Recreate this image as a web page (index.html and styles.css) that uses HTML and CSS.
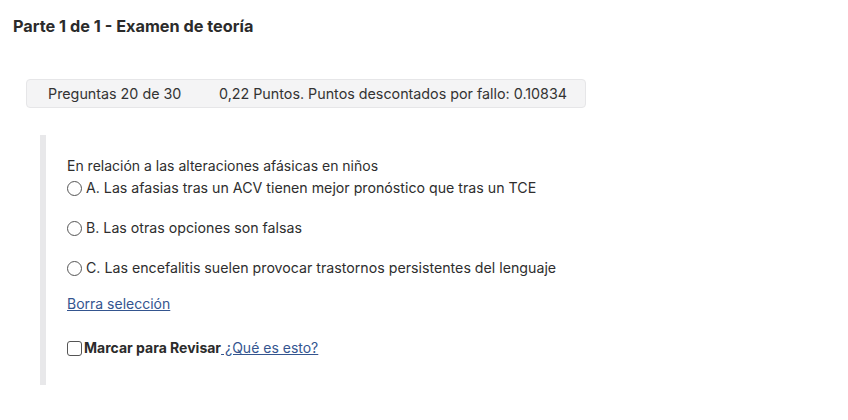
FILE: index.html
```html
<!DOCTYPE html>
<html lang="es">
<head>
<meta charset="utf-8">
<link rel="stylesheet" href="styles.css">
</head>
<body>
<h1 class="title">Parte 1 de 1 - Examen de teoría</h1>
<div class="infobar">
  <span class="count">Preguntas 20 de 30</span>
  <span class="points">0,22 Puntos. Puntos descontados por fallo: 0.10834</span>
</div>
<div class="question">
  <p class="stem">En relación a las alteraciones afásicas en niños</p>
  <div class="option first"><span class="radio"></span><span>A. Las afasias tras un ACV tienen mejor pronóstico que tras un TCE</span></div>
  <div class="option"><span class="radio"></span><span>B. Las otras opciones son falsas</span></div>
  <div class="option"><span class="radio"></span><span>C. Las encefalitis suelen provocar trastornos persistentes del lenguaje</span></div>
  <a class="clear" href="#">Borra selección</a>
  <div class="review"><span class="checkbox"></span><strong>Marcar para Revisar</strong><a class="what" href="#">&nbsp;¿Qué es esto?</a></div>
</div>
</body>
</html>
```
FILE: styles.css
```css
html, body {
  margin: 0;
  padding: 0;
  background: #ffffff;
}
body {
  font-family: Inter, "Noto Sans", sans-serif;
  color: #2e2e2e;
  font-size: 14px;
}
.title {
  margin: 16px 0 0 13px;
  font-size: 16.3px;
  font-weight: 700;
  line-height: 20px;
  color: #2b2b2b;
}
.infobar {
  margin: 43px 0 0 26px;
  width: 558px;
  height: 27px;
  box-sizing: content-box;
  display: flex;
  align-items: center;
  background: #f4f4f5;
  border: 1px solid #e6e6e8;
  border-radius: 4px;
  font-size: 14.3px;
  color: #333;
}
.count {
  margin-left: 21px;
  width: 171px;
}
.question {
  margin: 27px 0 0 40px;
  border-left: 6px solid #e8e8ea;
  padding: 20px 0 26px 21px;
}
.stem {
  margin: 0;
  line-height: 22px;
}
.option {
  display: flex;
  align-items: center;
  gap: 4px;
  line-height: 22px;
  margin-top: 18px;
  font-size: 14.2px;
}
.option.first {
  margin-top: 0;
}
.radio {
  width: 13px;
  height: 13px;
  border: 1.5px solid #555;
  border-radius: 50%;
  flex: none;
}
.clear {
  display: inline-block;
  margin-top: 14px;
  line-height: 22px;
  color: #34558f;
  text-decoration: underline;
}
.review {
  display: flex;
  align-items: center;
  margin-top: 22px;
  line-height: 22px;
}
.checkbox {
  width: 13px;
  height: 13px;
  border: 1.5px solid #555;
  border-radius: 3px;
  margin-right: 2px;
  flex: none;
}
.review strong {
  font-weight: 700;
  color: #2b2b2b;
}
.what {
  color: #34558f;
  text-decoration: underline;
}
```
